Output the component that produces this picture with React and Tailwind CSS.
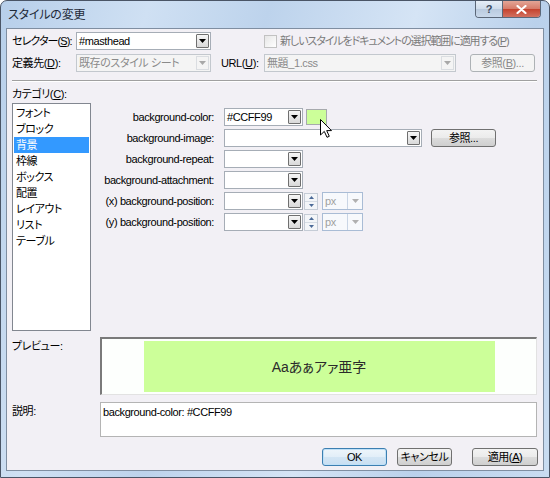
import React from 'react';

const FRAME =
  "bg-[linear-gradient(105deg,#b7cfea_0%,#cfe0f3_22%,#bdd3ec_40%,#d5e4f5_62%,#bad1eb_80%,#c9dcf1_100%)]";

function Arrow({ color = '#000' }) {
  return (
    <svg width="7" height="4" viewBox="0 0 7 4">
      <path d="M0 0H7L3.5 4Z" fill={color} />
    </svg>
  );
}

function Combo({ width, value, disabled }) {
  return (
    <div
      className={`flex h-[18px] shrink-0 items-center border ${width} ${
        disabled
          ? 'border-[#c3c8ce] bg-[#f4f4f4] text-[#8a8a8a]'
          : 'border-[#a6adb6] bg-white text-black'
      }`}
    >
      <span className="flex-1 overflow-hidden pl-[2px] leading-[16px]">{value}</span>
      {disabled ? (
        <span className="mr-[1px] flex h-[14px] w-[13px] shrink-0 items-center justify-center border border-[#dadde1]">
          <Arrow color="#a8a8a8" />
        </span>
      ) : (
        <span className="mr-[1px] flex h-[14px] w-[13px] shrink-0 items-center justify-center rounded-[1px] border border-[#6f6f6f] bg-[linear-gradient(#f6f6f6,#d9d9d9)]">
          <Arrow />
        </span>
      )}
    </div>
  );
}

function Spinner() {
  return (
    <div className="ml-[1px] flex h-[17px] w-[14px] shrink-0 flex-col border border-[#c5ccd6] bg-[#f3f5f8]">
      <span className="flex flex-1 items-center justify-center border-b border-[#d6dce4]">
        <svg width="5" height="3" viewBox="0 0 5 3">
          <path d="M0 3H5L2.5 0Z" fill="#4b6a98" />
        </svg>
      </span>
      <span className="flex flex-1 items-center justify-center">
        <svg width="5" height="3" viewBox="0 0 5 3">
          <path d="M0 0H5L2.5 3Z" fill="#4b6a98" />
        </svg>
      </span>
    </div>
  );
}

function UnitCombo() {
  return (
    <div className="ml-[4px] flex h-[18px] w-[41px] shrink-0 items-center border border-[#a9bcd5] bg-[#f7f9fc] text-[#a0a0a0]">
      <span className="flex-1 pl-[2px] leading-[16px]">px</span>
      <span className="flex h-[16px] w-[15px] items-center justify-center border-l border-[#c9d5e5]">
        <Arrow color="#b0b0b0" />
      </span>
    </div>
  );
}

function Button({ children, width, variant }) {
  const styles = {
    normal:
      'border-[#707070] bg-[linear-gradient(to_bottom,#f3f3f3_0%,#ebebeb_50%,#dcdcdc_50%,#cfcfcf_100%)] text-black',
    default:
      'border-[#3c7fb1] bg-[linear-gradient(to_bottom,#eef5fb_0%,#e2eef8_50%,#d3e5f4_50%,#c8dff2_100%)] text-black shadow-[inset_0_0_0_1px_#bfe0f7]',
    disabled: 'border-[#adb2b5] bg-[#f4f4f4] text-[#8a8a8a]',
  };
  return (
    <div
      className={`flex h-[18px] shrink-0 items-center justify-center rounded-[3px] border leading-[16px] ${width} ${styles[variant || 'normal']}`}
    >
      {children}
    </div>
  );
}

const categories = ['フォント', 'ブロック', '背景', '枠線', 'ボックス', '配置', 'レイアウト', 'リスト', 'テーブル'];

function FormRow({ label, children }) {
  return (
    <div className="flex h-[18px] items-center">
      <span className="w-[124px] shrink-0 pr-[1px] text-right leading-[16px]">{label}</span>
      <div className="ml-[9px] flex items-center">{children}</div>
    </div>
  );
}

export default function App() {
  return (
    <div className="h-[478px] w-[550px] whitespace-nowrap bg-white font-['Liberation_Sans','Noto_Sans_CJK_JP',sans-serif] text-[11px] tracking-[-0.4px] text-black [font-feature-settings:'palt']">
      <div className={`flex h-[478px] w-[550px] flex-col rounded-t-[7px] border border-[#4a5566] ${FRAME}`}>
        {/* title bar */}
        <div className="flex h-[27px] shrink-0 items-start">
          <span className="ml-[7px] mt-[7px] text-[12px] leading-[14px] tracking-[-0.2px] text-[#1e2a38]">
            スタイルの変更
          </span>
          <div className="ml-auto mr-[8px] flex h-[17px] overflow-hidden rounded-b-[4px] border border-t-0 border-[#5b6778]">
            <div className="flex w-[27px] items-center justify-center border-r border-[#5b6778] bg-[linear-gradient(to_bottom,#e6eef7_0%,#cfdceb_50%,#b9cade_50%,#c9d8ea_100%)] text-[11px] font-bold leading-none text-[#3b4a5e]">
              ?
            </div>
            <div className="flex w-[37px] items-center justify-center bg-[linear-gradient(to_bottom,#e3a596_0%,#d67a68_50%,#c4412c_50%,#d2705f_100%)]">
              <svg width="11" height="9" viewBox="0 0 11 9">
                <path d="M1.5 1L9.5 8M9.5 1L1.5 8" stroke="#ffffff" strokeWidth="2.2" strokeLinecap="round" />
              </svg>
            </div>
          </div>
        </div>

        {/* client area */}
        <div className="mx-[5px] flex h-[443px] shrink-0 flex-col border border-[#7f8ea1] bg-[#f2f0f5]">
          {/* selector row */}
          <div className="mt-[3px] flex h-[18px] items-center pl-[5px]">
            <span className="w-[64px] shrink-0 leading-[16px] tracking-[-0.9px]">
              セレクター(<u>S</u>):
            </span>
            <Combo width="w-[135px]" value="#masthead" />
            <span className="ml-[53px] h-[13px] w-[13px] shrink-0 border border-[#c2c2c2] bg-[linear-gradient(135deg,#e6e6e6,#ffffff)]" />
            <span className="ml-[3px] leading-[16px] tracking-[-1.1px] text-[#7a7a7a]">
              新しいスタイルをドキュメントの選択範囲に適用する(<u>P</u>)
            </span>
          </div>

          {/* define row */}
          <div className="mt-[4px] flex h-[18px] items-center pl-[5px]">
            <span className="w-[64px] shrink-0 leading-[16px]">
              定義先(<u>D</u>):
            </span>
            <Combo width="w-[135px]" value="既存のスタイル シート" disabled />
            <span className="ml-[10px] w-[43px] shrink-0 leading-[16px]">
              URL(<u>U</u>):
            </span>
            <Combo width="w-[192px]" value="無題_1.css" disabled />
            <div className="ml-[14px]">
              <Button width="w-[65px]" variant="disabled">
                参照(<u>B</u>)...
              </Button>
            </div>
          </div>

          {/* separator */}
          <div className="ml-[5px] mt-[8px] h-[2px] w-[525px] border-t border-b border-t-[#a0a0a0] border-b-white" />

          <div className="ml-[5px] mt-[5px] h-[14px] leading-[14px]">
            カテゴリ(<u>C</u>):
          </div>

          {/* list + form */}
          <div className="mt-[2px] flex">
            <div className="ml-[5px] h-[228px] w-[79px] shrink-0 border border-[#828790] bg-white pt-[1px]">
              {categories.map((c) => (
                <div
                  key={c}
                  className={`mx-[1px] flex h-[16px] items-center pl-[2px] leading-[16px] ${
                    c === '背景' ? 'bg-[#3399ff] text-white' : ''
                  }`}
                >
                  {c}
                </div>
              ))}
            </div>

            <div className="flex flex-col gap-[3px] pt-[5px]">
              <FormRow label="background-color:">
                <Combo width="w-[79px]" value="#CCFF99" />
                <div className="relative ml-[3px] h-[16px] w-[21px] border border-[#a7aaad] bg-[#ccff99]">
                  <svg
                    className="absolute left-[13px] top-[9px]"
                    width="12"
                    height="19"
                    viewBox="0 0 12 19"
                  >
                    <path
                      d="M0.5 0.5V16L4.3 12.4L7 18.3L9.3 17.3L6.7 11.6H11.5Z"
                      fill="#ffffff"
                      stroke="#000000"
                      strokeWidth="1"
                    />
                  </svg>
                </div>
              </FormRow>
              <FormRow label="background-image:">
                <Combo width="w-[198px]" value="" />
                <div className="ml-[9px]">
                  <Button width="w-[65px]">参照...</Button>
                </div>
              </FormRow>
              <FormRow label="background-repeat:">
                <Combo width="w-[79px]" value="" />
              </FormRow>
              <FormRow label="background-attachment:">
                <Combo width="w-[79px]" value="" />
              </FormRow>
              <FormRow label="(x) background-position:">
                <Combo width="w-[79px]" value="" />
                <Spinner />
                <UnitCombo />
              </FormRow>
              <FormRow label="(y) background-position:">
                <Combo width="w-[79px]" value="" />
                <Spinner />
                <UnitCombo />
              </FormRow>
            </div>
          </div>

          {/* preview */}
          <div className="mt-[6px] flex pl-[5px]">
            <span className="w-[88px] shrink-0 pt-[2px] leading-[14px]">プレビュー:</span>
            <div className="flex h-[58px] w-[437px] justify-center border-b border-r border-l-2 border-t-2 border-b-[#e2e2e2] border-l-[#7a7a7a] border-r-[#e2e2e2] border-t-[#7a7a7a] bg-[#fdfffd] pt-[2px]">
              <div className="flex h-[51px] w-[351px] items-center justify-center bg-[#ccff99] text-[14px] leading-none tracking-normal text-[#2b2b2b]">
                Aaあぁアァ亜字
              </div>
            </div>
          </div>

          {/* description */}
          <div className="mt-[7px] flex pl-[5px]">
            <span className="w-[88px] shrink-0 pt-[2px] leading-[14px]">説明:</span>
            <div className="h-[35px] w-[437px] border border-[#b4b4b4] bg-white pl-[2px] pt-[2px] leading-[14px]">
              background-color: #CCFF99
            </div>
          </div>

          {/* buttons */}
          <div className="mt-[11px] flex justify-end pr-[5px]">
            <Button width="w-[65px]" variant="default">
              OK
            </Button>
            <div className="ml-[10px]">
              <Button width="w-[55px]">キャンセル</Button>
            </div>
            <div className="ml-[20px]">
              <Button width="w-[66px]">
                適用(<u>A</u>)
              </Button>
            </div>
          </div>
        </div>
      </div>
    </div>
  );
}
